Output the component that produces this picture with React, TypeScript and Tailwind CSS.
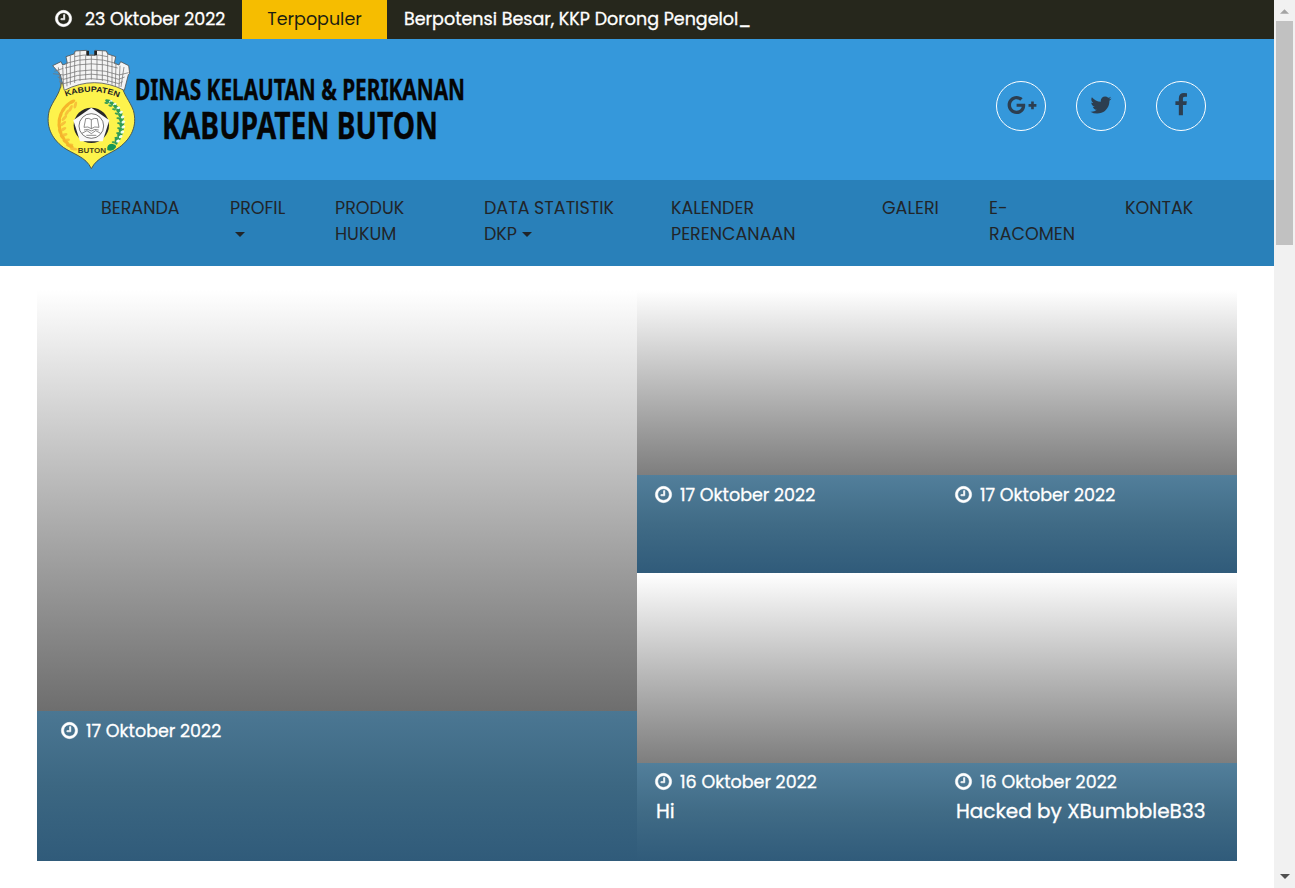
import React from "react";
import { FaGooglePlusG } from "react-icons/fa";

const CLOCK =
  "M1024 544v448q0 14-9 23t-23 9h-320q-14 0-23-9t-9-23v-64q0-14 9-23t23-9h224v-352q0-14 9-23t23-9h64q14 0 23 9t9 23zm416 352q0-148-73-273t-198-198-273-73-273 73-198 198-73 273 73 273 198 198 273 73 273-73 198-198 73-273zm224 0q0 209-103 385.5t-279.5 279.5-385.5 103-385.5-103-279.5-279.5-103-385.5 103-385.5 279.5-279.5 385.5-103 385.5 103 279.5 279.5 103 385.5z";
const TWITTER =
  "M1684 408q-67 98-162 167 1 14 1 42 0 130-38 259.5t-115.5 248.5-184.5 210.5-258 146-323 54.5q-271 0-496-145 35 4 78 4 225 0 401-138-105-2-188-64.5t-114-159.5q33 5 61 5 43 0 85-11-112-23-185.5-111.5t-73.5-205.5v-4q68 38 146 41-66-44-105-115t-39-154q0-88 44-163 121 149 294.5 238.5t371.5 99.5q-8-38-8-74 0-134 94.5-228.5t228.5-94.5q140 0 236 102 109-21 205-78-37 115-142 178 93-10 186-50z";
const FACEBOOK =
  "M1343 12v264h-157q-86 0-116 36t-30 108v189h293l-39 296h-254v759h-306v-759h-255v-296h255v-218q0-186 104-288.5t277-102.5q147 0 228 12z";

function Icon({ d, className }: { d: string; className: string }) {
  return (
    <svg viewBox="0 0 1792 1792" fill="currentColor" className={className}>
      <path d={d} />
    </svg>
  );
}

function Leaf({ x, y, r, fill, rx = 9, ry = 4.5 }: { x: number; y: number; r: number; fill: string; rx?: number; ry?: number }) {
  return <ellipse cx={x} cy={y} rx={rx} ry={ry} fill={fill} transform={`rotate(${r} ${x} ${y})`} />;
}

const WHEAT: [number, number][] = [
  [98, 189], [84, 199], [73, 212], [65, 228], [61, 245], [61, 262], [64, 279], [71, 295], [81, 309], [93, 321],
];
const COTTON: [number, number][] = [
  [207, 185], [219, 193], [230, 204], [238, 217], [243, 231], [245, 246], [245, 261], [242, 276], [237, 290], [229, 303],
];

function Logo() {
  return (
    <svg viewBox="0 0 440 135" className="h-[135px] w-[440px] shrink-0 overflow-visible">
      <g transform="translate(0 -1) scale(.33333)">
        <path
          d="M64 132C60 165 38 186 28 214c-12 46 6 84 42 111 28 20 68 28 84 64 18-36 58-44 84-64 36-27 55-65 42-111-10-28-32-49-36-82q-90-28-180 0z"
          fill="#fdf34c" stroke="#4d5a4e" strokeWidth="3"
        />
        <path
          d="M38 80l25-12 5 10 14-5-4-20 24-8 4-9 34-2v15h25V34l34 2 4 9 24 8-4 20 14 5 5-10 24 12 3 23-4 4-12 47q-90-46-180 0l-12-47-7-9z"
          fill="#f4f4f4" stroke="#555" strokeWidth="2.5"
        />
        <path
          d="M78 73Q154 48 228 73M75 87Q154 62 233 87M43 97l27-9M39 104l32 4Q154 78 237 108l29-7M53 114l18 7Q154 90 236 121l18-7M58 128l13 6Q154 104 236 134l12-6M104 53q50-12 99 0M104 38v94M91 50v87M120 36v90M137 49v73M154 49v73M171 49v73M187 36v90M203 40v92M216 50v87M79 72l2 70M68 80l3 66M55 85l8 60M228 72l-2 70M240 80l-3 66M252 84l-9 60"
          fill="none" stroke="#777" strokeWidth="2.3"
        />
        <path d="M140 35h7v14h-7zM163 35h8v14h-8z" fill="#222" />
        <path id="crest-arc" d="M77 173Q154 143 236 175" fill="none" />
        <text fontFamily="Liberation Sans, sans-serif" fontWeight="700" fontSize="23" fill="#222">
          <textPath href="#crest-arc" textLength="163" lengthAdjust="spacingAndGlyphs">KABUPATEN</textPath>
        </text>
        {WHEAT.map(([x, y], i) => (
          <g key={i}>
            <Leaf x={x - 3} y={y} r={-30 - i * 14} fill="#f5b52b" rx={12} ry={5} />
            <Leaf x={x + 8} y={y + 9} r={-75 + i * 9} fill="#f7c33a" rx={11} ry={4.5} />
          </g>
        ))}
        {COTTON.map(([x, y], i) => (
          <g key={i}>
            <Leaf x={x} y={y + 2} r={20 + i * 8} fill="#2f9b57" rx={12} ry={5} />
            <Leaf x={x + 5} y={y + 3} r={-30} fill="#effff0" rx={6} ry={4} />
            <Leaf x={x - 8} y={y + 7} r={10} fill="#3b9e56" rx={6} ry={3} />
          </g>
        ))}
        <path d="M202 333q-3-18 14-19 16 3 11 12-9 13-25 7z" fill="#159657" />
        <circle cx="154" cy="259" r="53" fill="#282828" />
        <path d="M154 206l54 38-20 63h-68l-20-63z" fill="#f9f9f9" />
        <circle cx="154" cy="261" r="37" fill="#fff" stroke="#333" strokeWidth="2" />
        <path
          d="M137 239q10-3 17 3 9-6 18-3l5 26q-14-4-23 4-10-8-22-4zM154 242v27M132 273q12-5 22 3 10-8 22-3M126 283l15-8 13 9 13-9 15 8M139 289h30"
          fill="none" stroke="#555" strokeWidth="2"
        />
        <text x="113" y="343" textLength="85" lengthAdjust="spacingAndGlyphs" fontFamily="Liberation Sans, sans-serif" fontWeight="700" fontSize="24" fill="#4a441a">
          BUTON
        </text>
      </g>
      <g fontFamily="Noto Sans, sans-serif" fontWeight="700" fill="#050505" stroke="#050505" strokeWidth="0.35">
        <text x="95" y="60.3" fontSize="28" textLength="330" lengthAdjust="spacingAndGlyphs">
          DINAS KELAUTAN &amp; PERIKANAN
        </text>
        <text x="122" y="99" fontSize="38" textLength="276" lengthAdjust="spacingAndGlyphs">
          KABUPATEN BUTON
        </text>
      </g>
    </svg>
  );
}

function Caret() {
  return (
    <svg viewBox="0 0 10 5" className="ml-[5px] inline-block h-[5px] w-[10px] align-[3px]">
      <path d="M0 0h10L5 5z" fill="#212529" />
    </svg>
  );
}

function PostDate({ children }: { children: string }) {
  return (
    <div className="flex h-[26px] items-center gap-[7px]">
      <Icon d={CLOCK} className="size-[19px] shrink-0 stroke-current stroke-[50px]" />
      <span className="whitespace-nowrap pt-[2px] text-[17.5px] [-webkit-text-stroke:0.3px]">{children}</span>
    </div>
  );
}

function SmallPost({ date, title }: { date: string; title?: string }) {
  return (
    <article className="w-[300px] pl-[17px]">
      <PostDate>{date}</PostDate>
      {title && (
        <h3 className="whitespace-nowrap pl-[2px] pt-[3px] text-[20px] leading-[28px] [-webkit-text-stroke:0.3px]">{title}</h3>
      )}
    </article>
  );
}

export default function App() {
  return (
    <div className="flex h-[888px] w-[1295px] overflow-hidden bg-white font-[Poppins,Inter,sans-serif]">
      <div className="flex w-[1274px] shrink-0 flex-col">
        <div className="flex h-[39px] bg-[#26271c] text-[17.5px] text-white">
          <div className="flex w-[242px] items-center gap-[12px] pb-[2px] pl-[54px]">
            <Icon d={CLOCK} className="size-[19px] shrink-0 stroke-current stroke-[50px]" />
            <span className="whitespace-nowrap pt-[2px] [-webkit-text-stroke:0.3px]">23 Oktober 2022</span>
          </div>
          <div className="flex w-[145px] items-center justify-center bg-[#f6bd00] text-[#1c1d12]">
            Terpopuler
          </div>
          <div className="flex items-center whitespace-nowrap pl-[17px] [-webkit-text-stroke:0.3px]">
            Berpotensi Besar, KKP Dorong Pengelol_
          </div>
        </div>

        <header className="flex h-[141px] items-start justify-between bg-[#3598db] pl-[40px] pr-[68px]">
          <div className="pt-px">
            <Logo />
          </div>
          <div className="flex gap-[30px] pt-[42px] text-[#2c3e50]">
            <a className="flex size-[50px] items-center justify-center rounded-full border border-white pb-[2px] pl-[1px]">
              <FaGooglePlusG className="h-[24px] w-[30px] shrink-0" />
            </a>
            <a className="flex size-[50px] items-center justify-center rounded-full border border-white pb-[3px]">
              <Icon d={TWITTER} className="size-[24px]" />
            </a>
            <a className="flex size-[50px] items-center justify-center rounded-full border border-white pb-[2px]">
              <Icon d={FACEBOOK} className="size-[24px]" />
            </a>
          </div>
        </header>

        <nav className="flex h-[86px] bg-[#2980b9] pl-[101px] pt-[15px] text-[17.5px] leading-[26px] text-[#212529]">
          <a className="w-[129px]">BERANDA</a>
          <a className="w-[105px]">PROFIL<br /><Caret /></a>
          <a className="w-[149px]">PRODUK<br />HUKUM</a>
          <a className="w-[187px]">DATA STATISTIK<br />DKP<Caret /></a>
          <a className="w-[211px]">KALENDER<br />PERENCANAAN</a>
          <a className="w-[107px]">GALERI</a>
          <a className="w-[136px]">E-<br />RACOMEN</a>
          <a>KONTAK</a>
        </nav>

        <main className="flex pl-[37px] pt-[24px] text-white">
          <section className="flex w-[600px] flex-col">
            <div className="h-[421px] bg-linear-to-b from-white to-[#6e6e6e]" />
            <div className="h-[150px] bg-linear-to-b from-[#4b7793] via-[#3c6782] to-[#305b7a] pl-[23px] pt-[6px]">
              <PostDate>17 Oktober 2022</PostDate>
            </div>
          </section>
          <section className="flex w-[600px] flex-col">
            <div className="h-[185px] bg-linear-to-b from-white to-[#7e7e7e]" />
            <div className="flex h-[98px] bg-linear-to-b from-[#527f9b] via-[#406b86] to-[#305b7a] pt-[6px]">
              <SmallPost date="17 Oktober 2022" />
              <SmallPost date="17 Oktober 2022" />
            </div>
            <div className="h-[190px] bg-linear-to-b from-white to-[#7e7e7e]" />
            <div className="flex h-[98px] bg-linear-to-b from-[#527f9b] via-[#406b86] to-[#305b7a] pt-[5px]">
              <SmallPost date="16 Oktober 2022" title="Hi" />
              <SmallPost date="16 Oktober 2022" title="Hacked by XBumbbleB33" />
            </div>
          </section>
        </main>
      </div>

      <div className="flex w-[21px] shrink-0 flex-col items-center bg-[#f1f1f1]">
        <div className="flex h-[21px] items-center pt-[2px]">
          <svg viewBox="0 0 10 5" className="h-[5px] w-[9px]"><path d="M5 0l5 5H0z" fill="#a3a3a3" /></svg>
        </div>
        <div className="h-[224px] w-[17px] bg-[#c1c1c1]" />
        <div className="mt-auto flex h-[21px] items-center pb-[2px]">
          <svg viewBox="0 0 10 5" className="h-[5px] w-[10px]"><path d="M0 0h10L5 5z" fill="#505050" /></svg>
        </div>
      </div>
    </div>
  );
}
